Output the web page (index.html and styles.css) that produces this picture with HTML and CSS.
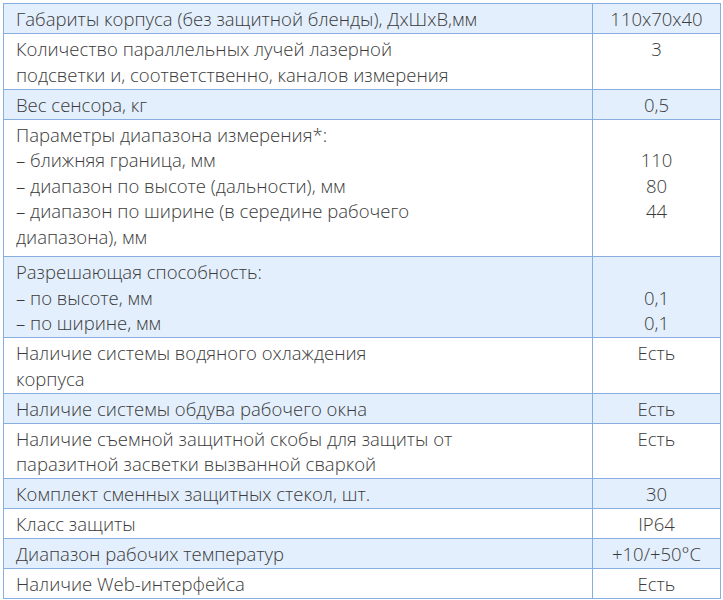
FILE: index.html
```html
<!DOCTYPE html>
<html lang="ru">
<head>
<meta charset="utf-8">
<link rel="stylesheet" href="styles.css">
</head>
<body>
<table class="spec">
  <colgroup><col class="c-name"><col class="c-val"></colgroup>
  <tr class="alt"><td>Габариты корпуса (без защитной бленды), ДхШхВ,мм</td><td class="val">110x70x40</td></tr>
  <tr><td>Количество параллельных лучей лазерной<br>подсветки и, соответственно, каналов измерения</td><td class="val">3</td></tr>
  <tr class="alt"><td>Вес сенсора, кг</td><td class="val">0,5</td></tr>
  <tr class="tall"><td>Параметры диапазона измерения*:<br>– ближняя граница, мм<br>– диапазон по высоте (дальности), мм<br>– диапазон по ширине (в середине рабочего<br>диапазона), мм</td><td class="val">&nbsp;<br>110<br>80<br>44</td></tr>
  <tr class="alt"><td>Разрешающая способность:<br>– по высоте, мм<br>– по ширине, мм</td><td class="val">&nbsp;<br>0,1<br>0,1</td></tr>
  <tr><td>Наличие системы водяного охлаждения<br>корпуса</td><td class="val">Есть</td></tr>
  <tr class="alt"><td>Наличие системы обдува рабочего окна</td><td class="val">Есть</td></tr>
  <tr><td>Наличие съемной защитной скобы для защиты от<br>паразитной засветки вызванной сваркой</td><td class="val">Есть</td></tr>
  <tr class="alt"><td>Комплект сменных защитных стекол, шт.</td><td class="val">30</td></tr>
  <tr><td>Класс защиты</td><td class="val">IP64</td></tr>
  <tr class="alt"><td>Диапазон рабочих температур</td><td class="val">+10/+50°C</td></tr>
  <tr><td>Наличие Web-интерфейса</td><td class="val">Есть</td></tr>
</table>
</body>
</html>
```
FILE: styles.css
```css
html, body {
  margin: 0;
  padding: 0;
  background: #ffffff;
}
body {
  padding: 3px 0 0 3px;
}
.spec {
  border-collapse: collapse;
  width: 717px;
  table-layout: fixed;
  font-family: "Open Sans", "Noto Sans", sans-serif;
  font-size: 18.5px;
  font-weight: 300;
  color: #3a3a3a;
}
.c-name { width: 589px; }
.c-val { width: 128px; }
.spec td {
  border: 1px solid #86aee0;
  padding: 2px 0 1.5px 12px;
  line-height: 25.5px;
  vertical-align: top;
  white-space: nowrap;
}
.spec tr.tall td {
  padding-bottom: 7px;
}
.spec td.val {
  text-align: center;
  padding-left: 0;
}
.spec tr.alt td {
  background: #e3effc;
}
```
